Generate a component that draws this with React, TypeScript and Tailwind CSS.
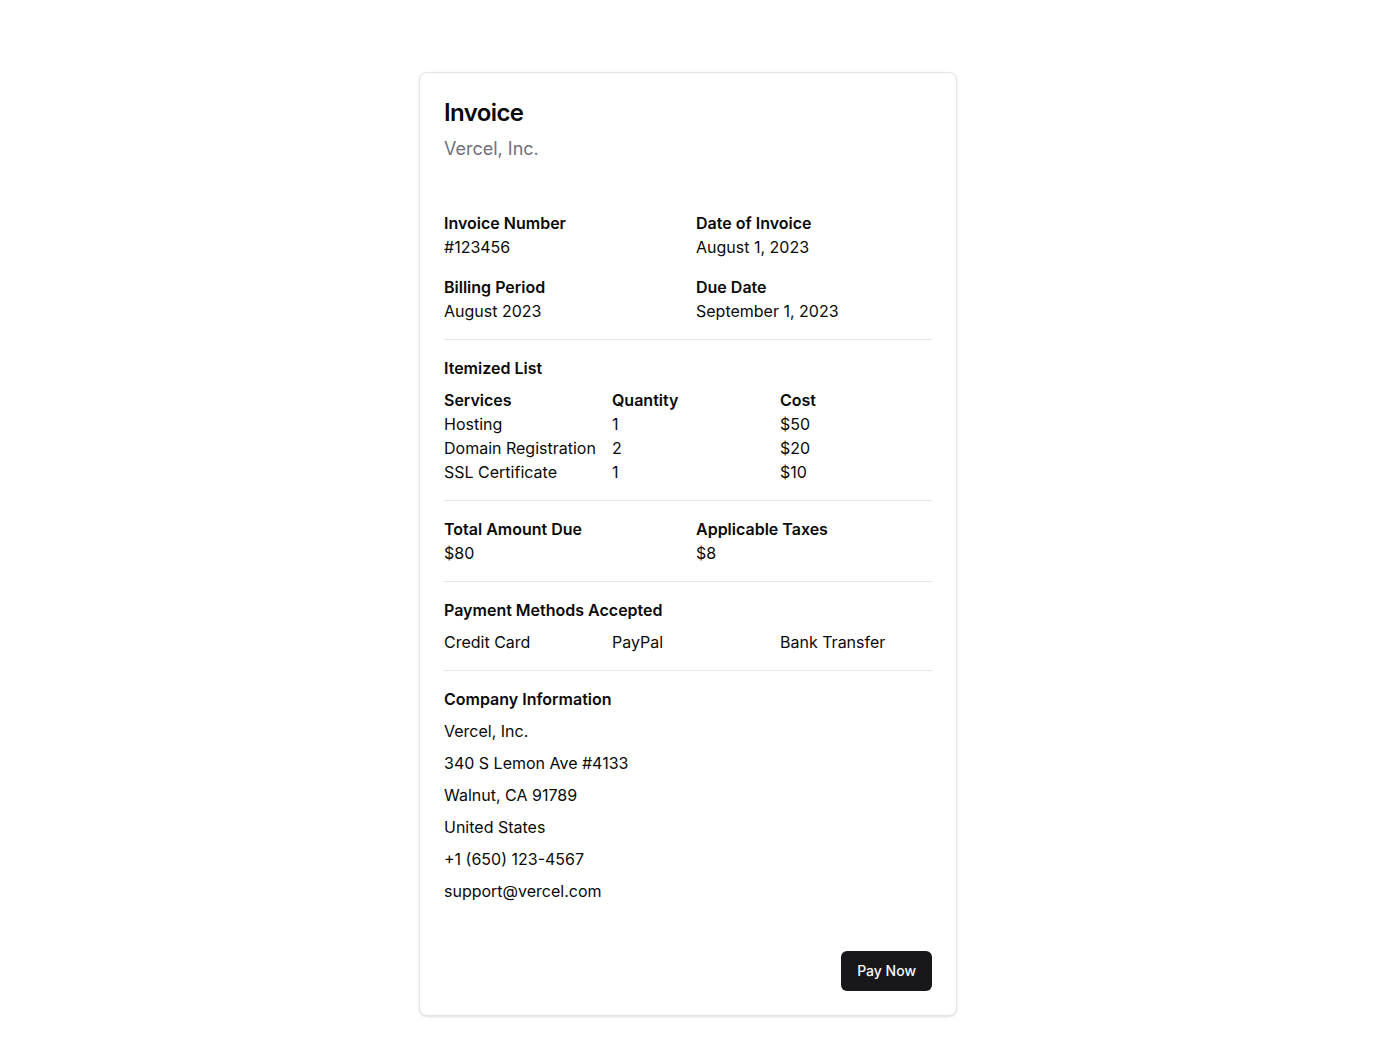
const details = [
  { label: "Invoice Number", value: "#123456" },
  { label: "Date of Invoice", value: "August 1, 2023" },
  { label: "Billing Period", value: "August 2023" },
  { label: "Due Date", value: "September 1, 2023" },
];

const items = [
  { service: "Hosting", qty: "1", cost: "$50" },
  { service: "Domain Registration", qty: "2", cost: "$20" },
  { service: "SSL Certificate", qty: "1", cost: "$10" },
];

const company = [
  "Vercel, Inc.",
  "340 S Lemon Ave #4133",
  "Walnut, CA 91789",
  "United States",
  "+1 (650) 123-4567",
  "support@vercel.com",
];

function Divider() {
  return <div className="my-4 h-px w-full bg-[#e5e7eb]" />;
}

export default function App() {
  return (
    <div className="min-h-screen bg-white font-['Inter',sans-serif] text-[#0a0a0a]">
      <div className="flex justify-center pt-[72px]">
        {/* ---------- Invoice card ---------- */}
        <div className="w-[538px] rounded-lg border border-[#e4e4e7] bg-white shadow-sm">
          <div className="flex flex-col gap-1.5 p-6">
            <h1 className="text-2xl font-semibold leading-8 tracking-tight">Invoice</h1>
            <p className="text-lg leading-7 text-[#71717a]">Vercel, Inc.</p>
          </div>

          <div className="p-6 text-base leading-6">
            <div className="grid grid-cols-2 gap-4">
              {details.map((d) => (
                <div key={d.label}>
                  <div className="font-semibold">{d.label}</div>
                  <div>{d.value}</div>
                </div>
              ))}
            </div>

            <Divider />

            <div className="flex flex-col gap-2">
              <div className="font-semibold">Itemized List</div>
              <div className="grid grid-cols-3 gap-x-4">
                <div className="font-semibold">Services</div>
                <div className="font-semibold">Quantity</div>
                <div className="font-semibold">Cost</div>
                {items.map((it) => (
                  <div key={it.service} className="contents">
                    <div>{it.service}</div>
                    <div>{it.qty}</div>
                    <div>{it.cost}</div>
                  </div>
                ))}
              </div>
            </div>

            <Divider />

            <div className="grid grid-cols-2 gap-4">
              <div>
                <div className="font-semibold">Total Amount Due</div>
                <div>$80</div>
              </div>
              <div>
                <div className="font-semibold">Applicable Taxes</div>
                <div>$8</div>
              </div>
            </div>

            <Divider />

            <div className="flex flex-col gap-2">
              <div className="font-semibold">Payment Methods Accepted</div>
              <div className="grid grid-cols-3 gap-4">
                <div>Credit Card</div>
                <div>PayPal</div>
                <div>Bank Transfer</div>
              </div>
            </div>

            <Divider />

            <div className="flex flex-col gap-2">
              <div className="font-semibold">Company Information</div>
              {company.map((line) => (
                <div key={line}>{line}</div>
              ))}
            </div>
          </div>

          {/* Footer keeps its own full padding, so the button sits well below the address block. */}
          <div className="flex justify-end p-6">
            <button className="inline-flex h-10 items-center justify-center rounded-md bg-[#18181b] px-4 text-sm font-medium text-[#fafafa]">
              Pay Now
            </button>
          </div>
        </div>
      </div>
    </div>
  );
}
